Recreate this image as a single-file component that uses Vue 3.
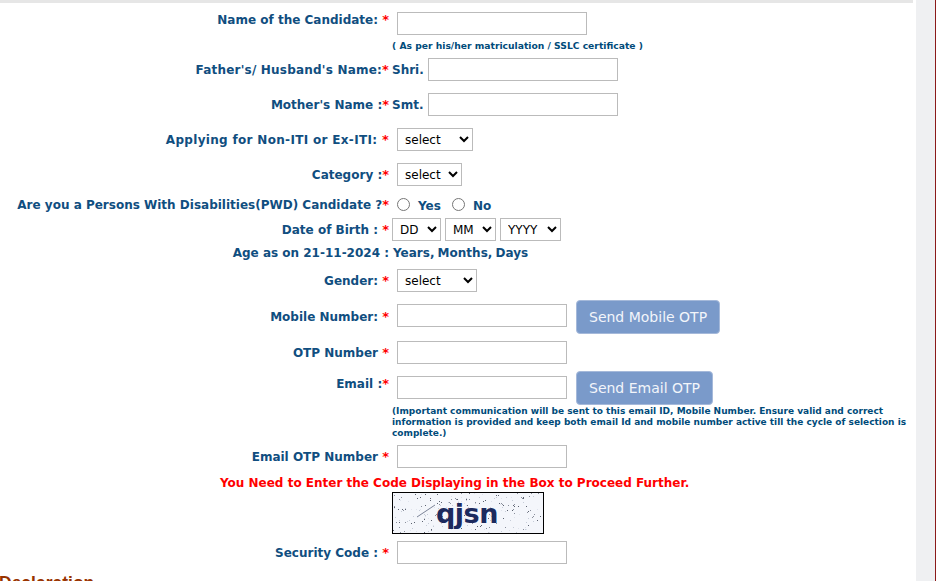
<script setup>
// seeded noise so the captcha looks the same on each load
let seed = 7
const rand = (max) => {
  seed = (seed * 16807) % 2147483647
  return seed % max
}
const noise = Array.from({ length: 220 }, () => ({
  x: rand(150),
  y: rand(40),
  fill: ['#8a8f9c', '#c6ccd8', '#5c6270', '#dfe3ec'][rand(4)],
}))
</script>

<template>
  <div class="page">
    <main class="sheet">
      <div class="row top">
        <label class="lbl">Name of the Candidate: <i>*</i></label>
        <div class="val"><input class="txt" type="text" /></div>
      </div>
      <div class="row hint-row">
        <div class="lbl"></div>
        <div class="hint">( As per his/her matriculation / SSLC certificate )</div>
      </div>
      <div class="row">
        <label class="lbl loose">Father's/ Husband's Name:<i>*</i></label>
        <div class="val prefixed"><b>Shri.</b><input class="txt" type="text" /></div>
      </div>
      <div class="row">
        <label class="lbl">Mother's Name :<i>*</i></label>
        <div class="val prefixed"><b>Smt.</b><input class="txt" type="text" /></div>
      </div>
      <div class="row">
        <label class="lbl looser">Applying for Non-ITI or Ex-ITI: <i>*</i></label>
        <div class="val">
          <select class="sel w76"><option>select</option></select>
        </div>
      </div>
      <div class="row">
        <label class="lbl">Category :<i>*</i></label>
        <div class="val">
          <select class="sel w65"><option>select</option></select>
        </div>
      </div>
      <div class="row pwd-row">
        <label class="lbl">Are you a Persons With Disabilities(PWD) Candidate ?<i>*</i></label>
        <div class="val radios">
          <input type="radio" name="pwd" /><b>Yes</b>
          <input type="radio" name="pwd" /><b>No</b>
        </div>
      </div>
      <div class="row dob-row">
        <label class="lbl">Date of Birth : <i>*</i></label>
        <div class="dob">
          <select class="sel w49"><option>DD</option></select>
          <select class="sel w51"><option>MM</option></select>
          <select class="sel w61"><option>YYYY</option></select>
        </div>
      </div>
      <div class="row age-row">
        <div class="lbl">Age as on 21-11-2024 :</div>
        <div class="age">Years, Months, Days</div>
      </div>
      <div class="row">
        <label class="lbl">Gender: <i>*</i></label>
        <div class="val">
          <select class="sel w80"><option>select</option></select>
        </div>
      </div>
      <div class="row btn-row">
        <label class="lbl">Mobile Number: <i>*</i></label>
        <div class="val">
          <input class="txt short" type="text" />
          <button class="otp" type="button">Send Mobile OTP</button>
        </div>
      </div>
      <div class="row">
        <label class="lbl">OTP Number <i>*</i></label>
        <div class="val"><input class="txt short" type="text" /></div>
      </div>
      <div class="row btn-row top-email">
        <label class="lbl">Email :<i>*</i></label>
        <div class="val">
          <input class="txt short" type="text" />
          <button class="otp" type="button">Send Email OTP</button>
        </div>
      </div>
      <div class="row note-row">
        <div class="lbl"></div>
        <div class="note">
          (Important communication will be sent to this email ID, Mobile Number. Ensure valid and correct
          information is provided and keep both email Id and mobile number active till the cycle of selection is
          complete.)
        </div>
      </div>
      <div class="row">
        <label class="lbl">Email OTP Number <i>*</i></label>
        <div class="val"><input class="txt short" type="text" /></div>
      </div>
      <p class="warn">You Need to Enter the Code Displaying in the Box to Proceed Further.</p>
      <div class="row captcha-row">
        <div class="lbl"></div>
        <svg class="captcha" width="152" height="42" viewBox="0 0 150 40">
          <rect width="150" height="40" fill="#f4f6fb" />
          <rect
            v-for="(dot, i) in noise"
            :key="i"
            :x="dot.x"
            :y="dot.y"
            width="1"
            height="1"
            :fill="dot.fill"
          />
          <line x1="24" y1="24" x2="42" y2="12" stroke="#7b8296" />
          <text x="43" y="30" class="captcha-text">qjsn</text>
        </svg>
      </div>
      <div class="row">
        <label class="lbl">Security Code : <i>*</i></label>
        <div class="val"><input class="txt short" type="text" /></div>
      </div>
      <h3 class="decl">Declaration</h3>
    </main>
    <aside class="rail"></aside>
  </div>
</template>

<style>
html,
body {
  margin: 0;
  overflow: hidden;
}
</style>

<style scoped>
.page {
  display: flex;
  width: 936px;
  height: 581px;
  overflow: hidden;
  font-family: 'DejaVu Sans', Verdana, sans-serif;
}

.sheet {
  width: 916px;
  flex: none;
  box-sizing: border-box;
  padding-top: 6px;
  background: linear-gradient(#e6e6e6, #e6e6e6) 0 0 / 913px 3px no-repeat #fff;
}

.rail {
  flex: 1;
  background: #eff0f2;
  border-right: 1px solid #8b1a1a;
}

.row {
  display: flex;
  align-items: center;
  height: 35px;
}

.lbl {
  width: 389px;
  flex: none;
  text-align: right;
  font-size: 12px;
  font-weight: 700;
  color: #104e80;
  white-space: pre-wrap;
}

.lbl i {
  font-style: normal;
  font-size: 13px;
  color: #f00;
}

.loose {
  letter-spacing: 0.2px;
}

.looser {
  letter-spacing: 0.32px;
}

.val {
  display: flex;
  align-items: center;
  margin-left: 8px;
}

.prefixed {
  margin-left: 3px;
}

.prefixed b {
  width: 36px;
  font-size: 12px;
  color: #104e80;
}

.txt {
  box-sizing: border-box;
  width: 190px;
  height: 23px;
  border: 1px solid #bbb;
  padding: 0;
  background: #fff;
}

.txt.short {
  width: 170px;
}

.sel {
  box-sizing: border-box;
  height: 23px;
  border: 1px solid #bbb;
  border-radius: 0;
  background: #fff;
  color: #000;
  font-family: 'DejaVu Sans', sans-serif;
  font-size: 12px;
  padding-left: 3px;
}

.w76 {
  width: 76px;
}

.w65 {
  width: 65px;
}

.w80 {
  width: 80px;
}

.w49 {
  width: 49px;
}

.w51 {
  width: 51px;
}

.w61 {
  width: 61px;
}

.top {
  height: 34px;
  align-items: flex-start;
}

.top .lbl {
  margin-top: 6px;
}

.top .val {
  margin-top: 6px;
}

.hint-row {
  height: 12px;
}

.hint {
  margin: 0 0 2px 3px;
  font-size: 9.2px;
  font-weight: 700;
  color: #004b7a;
}

.pwd-row {
  height: 24px;
}

.radios {
  gap: 0;
}

.radios input {
  width: 13px;
  height: 13px;
  margin: 0;
}

.radios b {
  width: 34px;
  margin: 4px 0 0 8px;
  font-size: 12px;
  color: #104e80;
}

.dob-row {
  height: 27px;
}

.dob {
  display: flex;
  gap: 4px;
  margin-left: 3px;
}

.age-row {
  height: 20px;
}

.age {
  margin-left: 4px;
  font-size: 12px;
  font-weight: 700;
  word-spacing: -1px;
  color: #104e80;
}

.btn-row {
  height: 37px;
}

.btn-row .txt {
  margin-bottom: 2px;
}

.top-email {
  height: 36px;
}

.top-email .lbl {
  margin-bottom: 10px;
}

.otp {
  box-sizing: border-box;
  height: 34px;
  margin-left: 9px;
  padding: 0 12px;
  border: 1px solid #a5b9da;
  border-radius: 4px;
  background: #7a9aca;
  color: #f2f5fa;
  font-family: 'DejaVu Sans', sans-serif;
  font-size: 14px;
}

.note-row {
  height: 33px;
  align-items: flex-start;
}

.note {
  width: 525px;
  margin-left: 3px;
  font-size: 9px;
  font-weight: 700;
  line-height: 11px;
  color: #004b7a;
}

.warn {
  height: 17px;
  margin: 0;
  padding-left: 220px;
  font-size: 12px;
  font-weight: 700;
  line-height: 19px;
  color: #f00;
}

.captcha-row {
  height: 44px;
}

.captcha {
  box-sizing: border-box;
  flex: none;
  margin-left: 3px;
  border: 1px solid #000;
}

.captcha-text {
  font-family: 'DejaVu Sans', sans-serif;
  font-size: 27px;
  font-weight: 700;
  letter-spacing: -0.5px;
  fill: #1c2a5e;
}

.decl {
  margin: 3px 0 0 -1px;
  font-family: 'Liberation Sans', Arial, sans-serif;
  font-size: 17.5px;
  font-weight: 700;
  color: #993300;
}
</style>
